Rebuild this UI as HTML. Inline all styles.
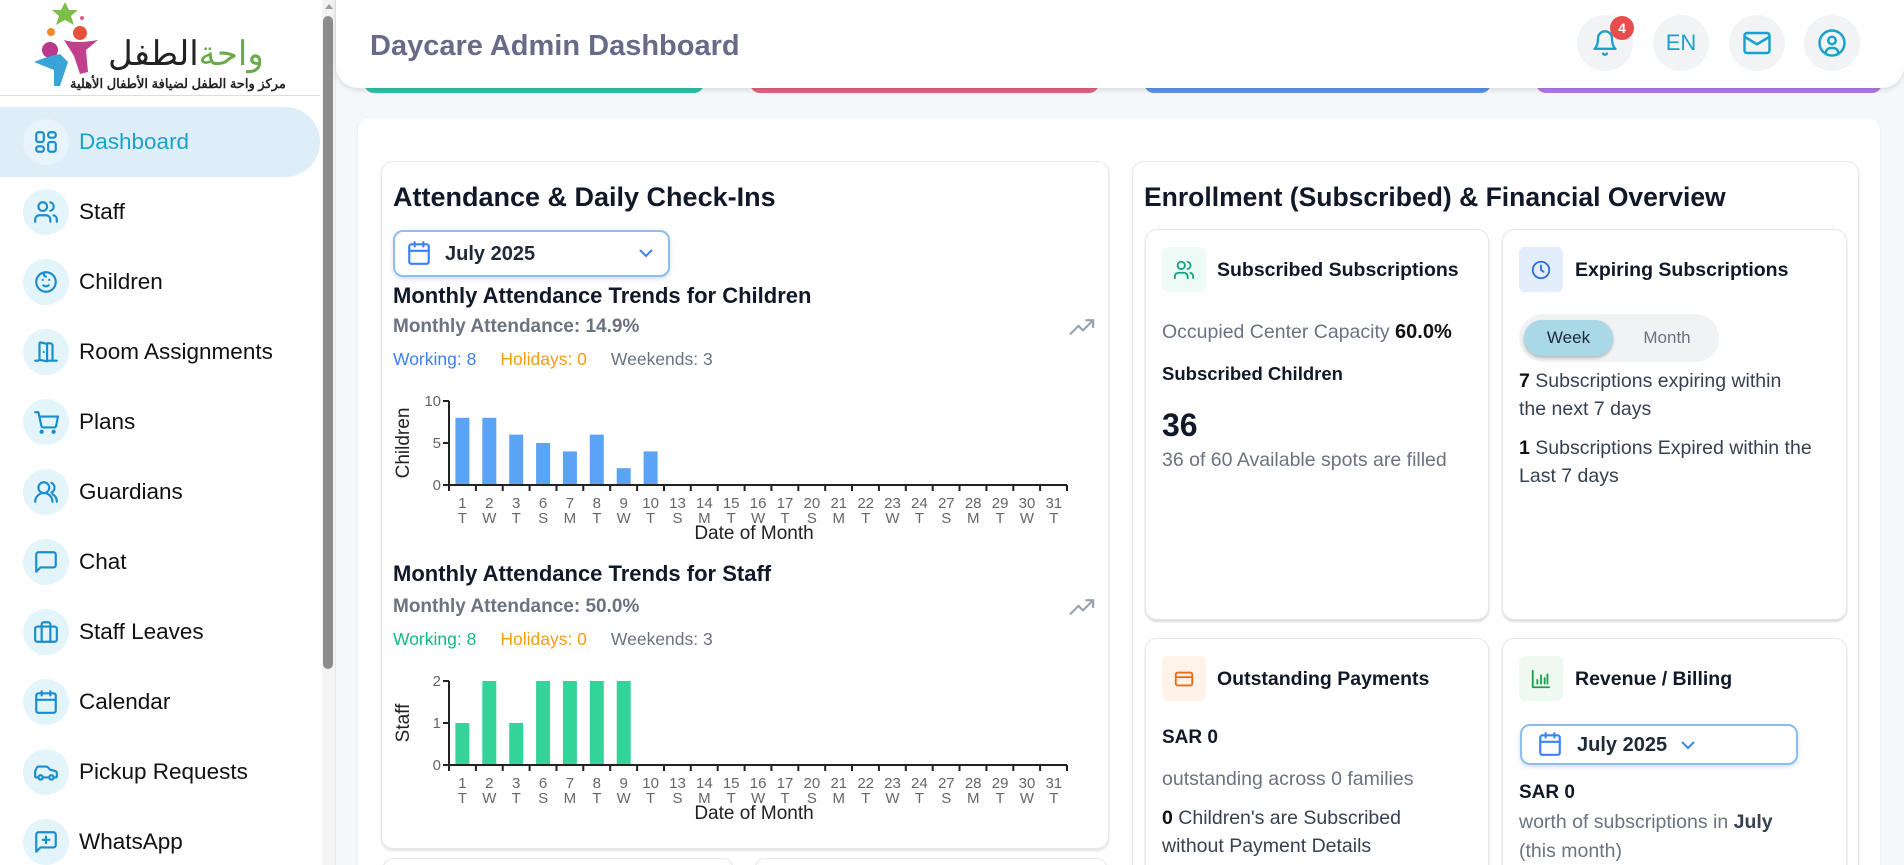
<!DOCTYPE html>
<html><head><meta charset="utf-8">
<style>
*{box-sizing:border-box;margin:0;padding:0}
html,body{width:1904px;height:865px;overflow:hidden;background:#f5f8fa;font-family:"Liberation Sans","Noto Sans CJK SC",sans-serif;color:#111827}
#wrap{position:relative;width:1904px;height:865px;overflow:hidden}
.abs{position:absolute}
#side{position:absolute;left:0;top:0;width:336px;height:865px;background:#fff;border-right:1px solid #e5e7eb}
.item{position:absolute;left:0;width:320px;height:70px}
.item .ic{position:absolute;left:23px;top:12px;width:46px;height:46px;border-radius:50%;background:#e3f4fa;display:flex;align-items:center;justify-content:center}
.item .tx{position:absolute;left:79px;top:0;line-height:70px;font-size:22.5px;color:#111}
.item svg{width:26px;height:26px;fill:none;stroke:#1a8dcc;stroke-width:2;stroke-linecap:round;stroke-linejoin:round}
.card{position:absolute;background:#fff;border:1px solid #e6e8eb;border-radius:12px;box-shadow:0 2px 3px rgba(0,0,0,.12)}
.sub{position:absolute;background:#fff;border:1px solid #e4e6ea;border-radius:12px;box-shadow:0 2px 2px rgba(0,0,0,.14)}
.hic{position:absolute;width:56px;height:56px;border-radius:50%;background:#f1f3f5;display:flex;align-items:center;justify-content:center;color:#1aa3c9;font-size:22px}
.t{position:absolute;white-space:nowrap}
.ibox{position:absolute;width:44px;height:45px;border-radius:6px;display:flex;align-items:center;justify-content:center}
.ibox svg{width:22px;height:22px;fill:none;stroke-width:2;stroke-linecap:round;stroke-linejoin:round}
.picker{position:absolute;border:2px solid #90bdf0;border-radius:10px;background:#fff;box-shadow:0 2px 5px rgba(80,130,200,.25)}
</style></head><body><div id="wrap">

<div id="side">
  <svg class="abs" style="left:30px;top:0" width="90" height="90" viewBox="0 0 90 90">
    <polygon points="35,2 39,10 48,10 41,16 44,25 35,20 26,25 29,16 22,10 31,10" fill="#7cc04a"/>
    <circle cx="21" cy="32" r="4" fill="#f08a2a"/>
    <circle cx="52" cy="18" r="2" fill="#e05a8a"/>
    <circle cx="50" cy="33" r="7" fill="#e6523c"/>
    <circle cx="20" cy="50" r="8" fill="#b8388c"/>
    <path d="M4 62 Q18 56 30 54 L38 62 L30 86 L24 86 L24 70 Q14 66 4 62Z" fill="#3aa4d8"/>
    <path d="M34 40 Q46 44 68 40 L56 50 L58 72 L50 74 L44 56 Z" fill="#c0408c"/>
  </svg>
  <div class="t" style="left:108px;top:34px;font-size:34px;line-height:40px;direction:rtl"><span style="color:#6aaa4a">واحة</span><span style="color:#222">الطفل</span></div>
  <div class="t" style="left:70px;top:76px;font-size:13px;line-height:16px;color:#222;direction:rtl;font-weight:bold">مركز واحة الطفل لضيافة الأطفال الأهلية</div>
  <div class="abs" style="left:0;top:95px;width:320px;height:1px;background:#dcdcdc"></div>

  <div class="item" style="top:107px;background:#ddeef8;border-radius:0 35px 35px 0">
    <div class="ic" style="background:#e8f4fa"><svg viewBox="0 0 24 24"><rect x="3" y="3" width="7" height="9" rx="2"/><rect x="14" y="3" width="7" height="5" rx="2"/><rect x="14" y="12" width="7" height="9" rx="2"/><rect x="3" y="16" width="7" height="5" rx="2"/></svg></div>
    <div class="tx" style="color:#1aa3c9">Dashboard</div>
  </div>
  <div class="item" style="top:177px"><div class="ic"><svg viewBox="0 0 24 24"><circle cx="9" cy="7" r="4"/><path d="M2 21v-2a4 4 0 0 1 4-4h6a4 4 0 0 1 4 4v2"/><path d="M16 3.1a4 4 0 0 1 0 7.8M22 21v-2a4 4 0 0 0-3-3.9"/></svg></div><div class="tx">Staff</div></div>
  <div class="item" style="top:247px"><div class="ic"><svg viewBox="0 0 24 24"><circle cx="12" cy="12" r="9"/><path d="M9 10h.01M15 10h.01M9.5 15a3.5 3.5 0 0 0 5 0M12 3a2 2 0 0 0 0 4"/></svg></div><div class="tx">Children</div></div>
  <div class="item" style="top:317px"><div class="ic"><svg viewBox="0 0 24 24"><path d="M13 4h3a2 2 0 0 1 2 2v14M2 20h3M13 20h9M10 12v.01M13 4.6v16l-7-1.4V4.2a1 1 0 0 1 1.2-1L13 4.6z"/></svg></div><div class="tx">Room Assignments</div></div>
  <div class="item" style="top:387px"><div class="ic"><svg viewBox="0 0 24 24"><circle cx="8" cy="21" r="1"/><circle cx="19" cy="21" r="1"/><path d="M2 3h3l2.7 12.4a2 2 0 0 0 2 1.6h9.7a2 2 0 0 0 2-1.6L23 7H6"/></svg></div><div class="tx">Plans</div></div>
  <div class="item" style="top:457px"><div class="ic"><svg viewBox="0 0 24 24"><circle cx="10" cy="8" r="5"/><path d="M2 21a8 8 0 0 1 16 0M17 3.5a5 5 0 0 1 0 9M22 21a8 8 0 0 0-4-7"/></svg></div><div class="tx">Guardians</div></div>
  <div class="item" style="top:527px"><div class="ic"><svg viewBox="0 0 24 24"><path d="M21 15a2 2 0 0 1-2 2H7l-4 4V5a2 2 0 0 1 2-2h14a2 2 0 0 1 2 2z"/></svg></div><div class="tx">Chat</div></div>
  <div class="item" style="top:597px"><div class="ic"><svg viewBox="0 0 24 24"><rect x="2" y="7" width="20" height="14" rx="2"/><path d="M16 21V5a2 2 0 0 0-2-2h-4a2 2 0 0 0-2 2v16M8 7v14"/></svg></div><div class="tx">Staff Leaves</div></div>
  <div class="item" style="top:667px"><div class="ic"><svg viewBox="0 0 24 24"><rect x="3" y="4" width="18" height="18" rx="2"/><path d="M16 2v4M8 2v4M3 10h18"/></svg></div><div class="tx">Calendar</div></div>
  <div class="item" style="top:737px"><div class="ic"><svg viewBox="0 0 24 24"><path d="M19 17h2c.6 0 1-.4 1-1v-3c0-.9-.7-1.7-1.5-1.9C18.7 10.6 16 10 16 10s-1.3-1.4-2.2-2.3c-.5-.4-1.1-.7-1.8-.7H5c-.6 0-1.1.4-1.4.9l-1.4 2.9A3.7 3.7 0 0 0 2 12v4c0 .6.4 1 1 1h2"/><circle cx="7" cy="17" r="2"/><path d="M9 17h6"/><circle cx="17" cy="17" r="2"/></svg></div><div class="tx">Pickup Requests</div></div>
  <div class="item" style="top:807px"><div class="ic"><svg viewBox="0 0 24 24"><path d="M21 15a2 2 0 0 1-2 2H7l-4 4V5a2 2 0 0 1 2-2h14a2 2 0 0 1 2 2z"/><path d="M12 7v6M9 10h6"/></svg></div><div class="tx">WhatsApp</div></div>

  <div class="abs" style="left:322px;top:0;width:13px;height:865px;background:#f3f3f3"></div>
  <div class="abs" style="left:325px;top:4px;width:0;height:0;border-left:4px solid transparent;border-right:4px solid transparent;border-bottom:5px solid #9a9a9a"></div>
  <div class="abs" style="left:323px;top:16px;width:10px;height:653px;background:#8c8c8c;border-radius:5px"></div>
</div>

<div class="abs" style="left:364px;top:76px;width:340px;height:17px;background:#2ec4a6;border-radius:0 0 10px 10px"></div>
<div class="abs" style="left:750px;top:76px;width:349px;height:17px;background:#e2637e;border-radius:0 0 10px 10px"></div>
<div class="abs" style="left:1144px;top:76px;width:347px;height:17px;background:#5b95e5;border-radius:0 0 10px 10px"></div>
<div class="abs" style="left:1536px;top:76px;width:346px;height:17px;background:#b07be6;border-radius:0 0 10px 10px"></div>

<div class="abs" style="left:336px;top:-20px;width:1568px;height:108px;background:#fff;border-radius:0 0 22px 22px;box-shadow:0 2px 6px rgba(0,0,0,.12)"></div>
<div class="t" style="left:370px;top:28px;font-size:29px;line-height:36px;color:#686b87;font-weight:600">Daycare Admin Dashboard</div>
<div class="hic" style="left:1577px;top:15px"><svg width="28" height="28" viewBox="0 0 24 24" fill="none" stroke="#1aa3c9" stroke-width="2" stroke-linecap="round" stroke-linejoin="round"><path d="M6 8a6 6 0 0 1 12 0c0 7 3 9 3 9H3s3-2 3-9"/><path d="M10.3 21a1.9 1.9 0 0 0 3.4 0"/></svg></div>
<div class="abs" style="left:1610px;top:16px;width:24px;height:24px;border-radius:50%;background:#e84c4c;color:#fff;font-size:14px;font-weight:bold;text-align:center;line-height:24px">4</div>
<div class="hic" style="left:1653px;top:15px">EN</div>
<div class="hic" style="left:1729px;top:15px"><svg width="30" height="30" viewBox="0 0 24 24" fill="none" stroke="#1aa3c9" stroke-width="2" stroke-linejoin="round"><rect x="2" y="4" width="20" height="16" rx="2"/><path d="M22 7l-10 6L2 7"/></svg></div>
<div class="hic" style="left:1804px;top:15px"><svg width="30" height="30" viewBox="0 0 24 24" fill="none" stroke="#1aa3c9" stroke-width="2" stroke-linecap="round"><circle cx="12" cy="12" r="10"/><circle cx="12" cy="10" r="3"/><path d="M7 20.7v-.7a4 4 0 0 1 4-4h2a4 4 0 0 1 4 4v.7"/></svg></div>

<div class="abs" style="left:358px;top:118px;width:1522px;height:760px;background:#fff;border-radius:12px;box-shadow:0 1px 3px rgba(0,0,0,.08)"></div>

<div class="card" style="left:381px;top:161px;width:728px;height:688px"></div>
<div class="card" style="left:383px;top:858px;width:350px;height:20px"></div>
<div class="card" style="left:755px;top:858px;width:352px;height:20px"></div>
<div class="t" style="left:393px;top:180px;font-size:27px;line-height:34px;font-weight:600">Attendance &amp; Daily Check-Ins</div>
<div class="picker" style="left:393px;top:230px;width:277px;height:47px"></div>
<svg class="abs" style="left:406px;top:240px" width="26" height="26" viewBox="0 0 24 24" fill="none" stroke="#3b82f6" stroke-width="2" stroke-linecap="round"><rect x="3" y="4" width="18" height="18" rx="2"/><path d="M16 2v4M8 2v4M3 10h18"/></svg>
<div class="t" style="left:445px;top:242px;font-size:20px;line-height:24px;font-weight:600;color:#1f2937">July 2025</div>
<svg class="abs" style="left:637px;top:246px" width="18" height="14" viewBox="0 0 18 14" fill="none" stroke="#3b82f6" stroke-width="2"><path d="M3 4l6 6 6-6"/></svg>

<div class="t" style="left:393px;top:282px;font-size:22px;line-height:28px;font-weight:600">Monthly Attendance Trends for Children</div>
<div class="t" style="left:393px;top:315px;font-size:19px;line-height:24px;font-weight:600;color:#6b7280">Monthly Attendance: 14.9%</div>
<div class="t" style="left:393px;top:348px;font-size:17.5px;line-height:22px"><span style="color:#3b82f6">Working: 8</span><span style="color:#f59e0b;margin-left:24px">Holidays: 0</span><span style="color:#6b7280;margin-left:24px">Weekends: 3</span></div>
<svg class="abs" style="left:1069px;top:318px" width="28" height="18" viewBox="0 0 24 16" fill="none" stroke="#9ca3af" stroke-width="2" stroke-linecap="round" stroke-linejoin="round"><path d="M1 14l7-7 4 4 9-9M15 2h6v6"/></svg>

<div class="t" style="left:393px;top:560px;font-size:22px;line-height:28px;font-weight:600">Monthly Attendance Trends for Staff</div>
<div class="t" style="left:393px;top:595px;font-size:19px;line-height:24px;font-weight:600;color:#6b7280">Monthly Attendance: 50.0%</div>
<div class="t" style="left:393px;top:628px;font-size:17.5px;line-height:22px"><span style="color:#10b981">Working: 8</span><span style="color:#f59e0b;margin-left:24px">Holidays: 0</span><span style="color:#6b7280;margin-left:24px">Weekends: 3</span></div>
<svg class="abs" style="left:1069px;top:598px" width="28" height="18" viewBox="0 0 24 16" fill="none" stroke="#9ca3af" stroke-width="2" stroke-linecap="round" stroke-linejoin="round"><path d="M1 14l7-7 4 4 9-9M15 2h6v6"/></svg>

<svg class="abs" style="left:0;top:0" width="1904" height="865" font-family="Liberation Sans, sans-serif">
 <g transform="translate(449,485)">
  <g fill="#5ba3f5">
   <rect x="6.4" y="-67.2" width="14" height="67.2"/><rect x="33.3" y="-67.2" width="14" height="67.2"/>
   <rect x="60.2" y="-50.4" width="14" height="50.4"/><rect x="87.1" y="-42" width="14" height="42"/>
   <rect x="113.9" y="-33.6" width="14" height="33.6"/><rect x="140.8" y="-50.4" width="14" height="50.4"/>
   <rect x="167.7" y="-16.8" width="14" height="16.8"/><rect x="194.6" y="-33.6" width="14" height="33.6"/>
  </g>
  <g stroke="#222" stroke-width="2" fill="none">
   <path d="M0 -84V6M0 0H618M-6 0H0M-6 -42H0M-6 -84H0"/>
   <path d="M26.9 0v6M53.7 0v6M80.6 0v6M107.5 0v6M134.3 0v6M161.2 0v6M188.1 0v6M215 0v6M241.8 0v6M268.7 0v6M295.6 0v6M322.4 0v6M349.3 0v6M376.2 0v6M403 0v6M429.9 0v6M456.8 0v6M483.7 0v6M510.5 0v6M537.4 0v6M564.3 0v6M591.1 0v6M618 0v6"/>
  </g>
  <g font-size="15" fill="#666" text-anchor="end"><text x="-8" y="5">0</text><text x="-8" y="-37">5</text><text x="-8" y="-79">10</text></g>
  <g font-size="15" fill="#666" text-anchor="middle">
   <text x="13.4" y="23">1</text><text x="40.3" y="23">2</text><text x="67.2" y="23">3</text><text x="94.1" y="23">6</text><text x="120.9" y="23">7</text><text x="147.8" y="23">8</text><text x="174.7" y="23">9</text><text x="201.6" y="23">10</text><text x="228.5" y="23">13</text><text x="255.4" y="23">14</text><text x="282.2" y="23">15</text><text x="309.1" y="23">16</text><text x="336" y="23">17</text><text x="362.9" y="23">20</text><text x="389.8" y="23">21</text><text x="416.7" y="23">22</text><text x="443.5" y="23">23</text><text x="470.4" y="23">24</text><text x="497.3" y="23">27</text><text x="524.2" y="23">28</text><text x="551.1" y="23">29</text><text x="578" y="23">30</text><text x="604.8" y="23">31</text>
   <text x="13.4" y="38">T</text><text x="40.3" y="38">W</text><text x="67.2" y="38">T</text><text x="94.1" y="38">S</text><text x="120.9" y="38">M</text><text x="147.8" y="38">T</text><text x="174.7" y="38">W</text><text x="201.6" y="38">T</text><text x="228.5" y="38">S</text><text x="255.4" y="38">M</text><text x="282.2" y="38">T</text><text x="309.1" y="38">W</text><text x="336" y="38">T</text><text x="362.9" y="38">S</text><text x="389.8" y="38">M</text><text x="416.7" y="38">T</text><text x="443.5" y="38">W</text><text x="470.4" y="38">T</text><text x="497.3" y="38">S</text><text x="524.2" y="38">M</text><text x="551.1" y="38">T</text><text x="578" y="38">W</text><text x="604.8" y="38">T</text>
  </g>
  <text x="305" y="54" font-size="19" fill="#222" text-anchor="middle">Date of Month</text>
  <text transform="translate(-40,-42) rotate(-90)" font-size="19" fill="#222" text-anchor="middle">Children</text>
 </g>
 <g transform="translate(449,765)">
  <g fill="#34d399">
   <rect x="6.4" y="-42" width="14" height="42"/><rect x="33.3" y="-84" width="14" height="84"/>
   <rect x="60.2" y="-42" width="14" height="42"/><rect x="87.1" y="-84" width="14" height="84"/>
   <rect x="113.9" y="-84" width="14" height="84"/><rect x="140.8" y="-84" width="14" height="84"/>
   <rect x="167.7" y="-84" width="14" height="84"/>
  </g>
  <g stroke="#222" stroke-width="2" fill="none">
   <path d="M0 -84V6M0 0H618M-6 0H0M-6 -42H0M-6 -84H0"/>
   <path d="M26.9 0v6M53.7 0v6M80.6 0v6M107.5 0v6M134.3 0v6M161.2 0v6M188.1 0v6M215 0v6M241.8 0v6M268.7 0v6M295.6 0v6M322.4 0v6M349.3 0v6M376.2 0v6M403 0v6M429.9 0v6M456.8 0v6M483.7 0v6M510.5 0v6M537.4 0v6M564.3 0v6M591.1 0v6M618 0v6"/>
  </g>
  <g font-size="15" fill="#666" text-anchor="end"><text x="-8" y="5">0</text><text x="-8" y="-37">1</text><text x="-8" y="-79">2</text></g>
  <g font-size="15" fill="#666" text-anchor="middle">
   <text x="13.4" y="23">1</text><text x="40.3" y="23">2</text><text x="67.2" y="23">3</text><text x="94.1" y="23">6</text><text x="120.9" y="23">7</text><text x="147.8" y="23">8</text><text x="174.7" y="23">9</text><text x="201.6" y="23">10</text><text x="228.5" y="23">13</text><text x="255.4" y="23">14</text><text x="282.2" y="23">15</text><text x="309.1" y="23">16</text><text x="336" y="23">17</text><text x="362.9" y="23">20</text><text x="389.8" y="23">21</text><text x="416.7" y="23">22</text><text x="443.5" y="23">23</text><text x="470.4" y="23">24</text><text x="497.3" y="23">27</text><text x="524.2" y="23">28</text><text x="551.1" y="23">29</text><text x="578" y="23">30</text><text x="604.8" y="23">31</text>
   <text x="13.4" y="38">T</text><text x="40.3" y="38">W</text><text x="67.2" y="38">T</text><text x="94.1" y="38">S</text><text x="120.9" y="38">M</text><text x="147.8" y="38">T</text><text x="174.7" y="38">W</text><text x="201.6" y="38">T</text><text x="228.5" y="38">S</text><text x="255.4" y="38">M</text><text x="282.2" y="38">T</text><text x="309.1" y="38">W</text><text x="336" y="38">T</text><text x="362.9" y="38">S</text><text x="389.8" y="38">M</text><text x="416.7" y="38">T</text><text x="443.5" y="38">W</text><text x="470.4" y="38">T</text><text x="497.3" y="38">S</text><text x="524.2" y="38">M</text><text x="551.1" y="38">T</text><text x="578" y="38">W</text><text x="604.8" y="38">T</text>
  </g>
  <text x="305" y="54" font-size="19" fill="#222" text-anchor="middle">Date of Month</text>
  <text transform="translate(-40,-42) rotate(-90)" font-size="19" fill="#222" text-anchor="middle">Staff</text>
 </g>
</svg>

<div class="card" style="left:1132px;top:161px;width:727px;height:720px"></div>
<div class="t" style="left:1144px;top:180px;font-size:26.5px;line-height:34px;font-weight:600">Enrollment (Subscribed) &amp; Financial Overview</div>

<div class="sub" style="left:1145px;top:229px;width:344px;height:391px"></div>
<div class="ibox" style="left:1162px;top:247px;background:#eefaf6"><svg viewBox="0 0 24 24" stroke="#10a37f"><circle cx="9" cy="7" r="4"/><path d="M2 21v-2a4 4 0 0 1 4-4h6a4 4 0 0 1 4 4v2M16 3.1a4 4 0 0 1 0 7.8M22 21v-2a4 4 0 0 0-3-3.9"/></svg></div>
<div class="t" style="left:1217px;top:257px;font-size:19.5px;line-height:26px;font-weight:600">Subscribed Subscriptions</div>
<div class="t" style="left:1162px;top:320px;font-size:19.5px;line-height:24px;color:#6b7280">Occupied Center Capacity <span style="color:#111;font-weight:bold;font-size:20px">60.0%</span></div>
<div class="t" style="left:1162px;top:362px;font-size:18.5px;line-height:24px;font-weight:600">Subscribed Children</div>
<div class="t" style="left:1162px;top:405px;font-size:32px;line-height:40px;font-weight:600">36</div>
<div class="t" style="left:1162px;top:448px;font-size:19.5px;line-height:24px;color:#6b7280">36 of 60 Available spots are filled</div>

<div class="sub" style="left:1502px;top:229px;width:345px;height:391px"></div>
<div class="ibox" style="left:1519px;top:247px;background:#e4edfc"><svg viewBox="0 0 24 24" stroke="#2f6fe0"><circle cx="12" cy="12" r="9"/><path d="M12 7v5l3 2"/></svg></div>
<div class="t" style="left:1575px;top:257px;font-size:19.5px;line-height:26px;font-weight:600">Expiring Subscriptions</div>
<div class="abs" style="left:1519px;top:314px;width:200px;height:48px;background:#f1f2f4;border-radius:24px"></div>
<div class="abs" style="left:1524px;top:320px;width:89px;height:36px;background:#a9d8e6;border-radius:18px;box-shadow:0 2px 3px rgba(0,0,0,.25)"></div>
<div class="t" style="left:1524px;top:327px;width:89px;text-align:center;font-size:17px;line-height:22px;color:#1f2937">Week</div>
<div class="t" style="left:1622px;top:327px;width:90px;text-align:center;font-size:17px;line-height:22px;color:#6b7280">Month</div>
<div class="t" style="left:1519px;top:367px;font-size:19.5px;line-height:28px;color:#374151"><b style="color:#111">7</b> Subscriptions expiring within<br>the next 7 days</div>
<div class="t" style="left:1519px;top:434px;font-size:19.5px;line-height:28px;color:#374151"><b style="color:#111">1</b> Subscriptions Expired within the<br>Last 7 days</div>

<div class="sub" style="left:1145px;top:638px;width:344px;height:240px"></div>
<div class="ibox" style="left:1162px;top:656px;background:#fff3ea"><svg viewBox="0 0 24 24" stroke="#ea6a1a"><rect x="3" y="5" width="18" height="14" rx="2"/><path d="M3 10h18"/></svg></div>
<div class="t" style="left:1217px;top:666px;font-size:19.5px;line-height:26px;font-weight:600">Outstanding Payments</div>
<div class="t" style="left:1162px;top:726px;font-size:19px;line-height:24px;font-weight:600">SAR 0</div>
<div class="t" style="left:1162px;top:767px;font-size:19.5px;line-height:24px;color:#6b7280">outstanding across 0 families</div>
<div class="t" style="left:1162px;top:804px;font-size:19.5px;line-height:28px;color:#374151"><b style="color:#111">0</b> Children's are Subscribed<br>without Payment Details</div>

<div class="sub" style="left:1502px;top:638px;width:345px;height:240px"></div>
<div class="ibox" style="left:1519px;top:656px;background:#eefaf1"><svg viewBox="0 0 24 24" stroke="#16a34a"><path d="M3 3v18h18M8 17v-4M12 17V8M16 17v-6M19 17V7"/></svg></div>
<div class="t" style="left:1575px;top:666px;font-size:19.5px;line-height:26px;font-weight:600">Revenue / Billing</div>
<div class="picker" style="left:1520px;top:724px;width:278px;height:41px"></div>
<svg class="abs" style="left:1537px;top:731px" width="26" height="26" viewBox="0 0 24 24" fill="none" stroke="#3b82f6" stroke-width="2" stroke-linecap="round"><rect x="3" y="4" width="18" height="18" rx="2"/><path d="M16 2v4M8 2v4M3 10h18"/></svg>
<div class="t" style="left:1577px;top:733px;font-size:20px;line-height:24px;font-weight:600;color:#1f2937">July 2025</div>
<svg class="abs" style="left:1679px;top:738px" width="18" height="14" viewBox="0 0 18 14" fill="none" stroke="#3b82f6" stroke-width="2"><path d="M3 4l6 6 6-6"/></svg>
<div class="t" style="left:1519px;top:781px;font-size:19px;line-height:24px;font-weight:600">SAR 0</div>
<div class="t" style="left:1519px;top:808px;font-size:19.5px;line-height:29px;color:#6b7280">worth of subscriptions in <b style="color:#374151">July</b><br>(this month)</div>

</div></body></html>
